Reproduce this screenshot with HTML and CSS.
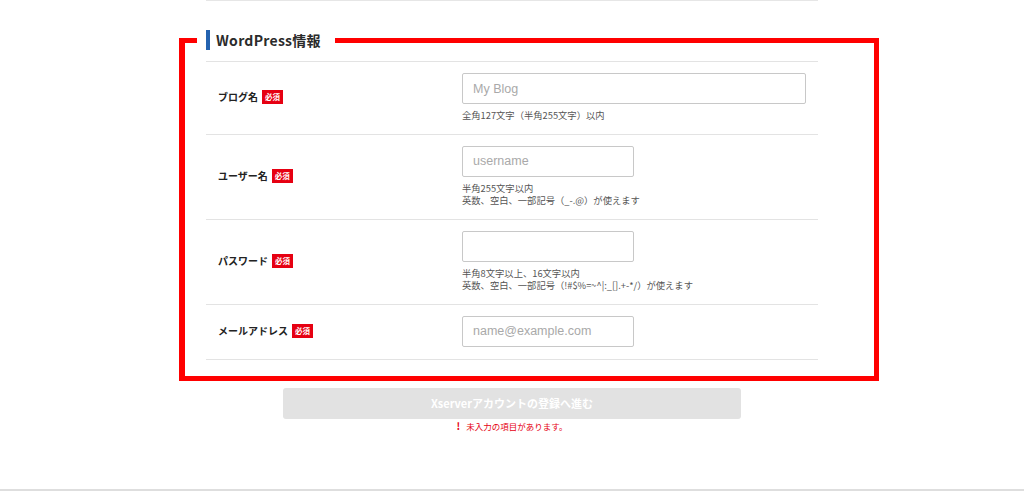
FILE: index.html
```html
<!DOCTYPE html>
<html lang="ja">
<head>
    <meta charset="UTF-8">
    <meta name="viewport" content="width=device-width, initial-scale=1.0">
    <title>WordPress情報</title>
    <link rel="stylesheet" href="styles.css">
</head>
<body>
    <div class="container">
        <section class="wp-section">
            <h2 class="section-title">WordPress情報</h2>
            <div class="highlight-frame"></div>

            <div class="field-list">
                <div class="field">
                    <div class="field-label">ブログ名<span class="required">必須</span></div>
                    <div class="field-body">
                        <input class="text-input wide" type="text" placeholder="My Blog">
                        <p class="hint">全角127文字（半角255文字）以内</p>
                    </div>
                </div>
                <div class="field">
                    <div class="field-label">ユーザー名<span class="required">必須</span></div>
                    <div class="field-body">
                        <input class="text-input" type="text" placeholder="username">
                        <p class="hint">半角255文字以内<br>英数、空白、一部記号（_-.@）が使えます</p>
                    </div>
                </div>
                <div class="field">
                    <div class="field-label">パスワード<span class="required">必須</span></div>
                    <div class="field-body">
                        <input class="text-input" type="password">
                        <p class="hint">半角8文字以上、16文字以内<br>英数、空白、一部記号（!#$%=~^|:_[].+-*/）が使えます</p>
                    </div>
                </div>
                <div class="field">
                    <div class="field-label">メールアドレス<span class="required">必須</span></div>
                    <div class="field-body">
                        <input class="text-input" type="email" placeholder="name@example.com">
                    </div>
                </div>
            </div>
        </section>

        <div class="actions">
            <button class="submit-btn" type="button" disabled>Xserverアカウントの登録へ進む</button>
            <p class="error-msg"><span class="error-icon">!</span>未入力の項目があります。</p>
        </div>
    </div>

    <footer class="page-footer"></footer>
</body>
</html>
```

FILE: styles.css
```css
* {
    margin: 0;
    padding: 0;
    box-sizing: border-box;
}

body {
    font-family: "Noto Sans CJK JP", "Noto Sans", sans-serif;
    color: #333;
    background: #fff;
    min-height: 491px;
    overflow: hidden;
}

.container {
    width: 612px;
    margin: 0 auto;
}

.wp-section {
    position: relative;
    border-top: 1px solid #e6e6e6;
    padding-top: 29px;
}

.section-title {
    position: relative;
    z-index: 1;
    display: flex;
    align-items: center;
    width: fit-content;
    height: 20px;
    margin: 0 0 11px -9px;
    padding: 0 14px 0 9px;
    background: #fff;
    font-size: 14px;
    font-weight: 700;
    line-height: 20px;
    letter-spacing: 0.02em;
    color: #2b2b2b;
}

.section-title::before {
    content: '';
    display: block;
    width: 4px;
    height: 20px;
    margin-right: 6px;
    background: #2463b0;
}

/* red annotation box drawn over the section */
.highlight-frame {
    position: absolute;
    top: 37px;
    left: -27px;
    width: 700px;
    height: 343px;
    border: 5px solid #ff0000;
    border-left-width: 6px;
    pointer-events: none;
}

.field-list {
    border-top: 1px solid #e3e3e3;
}

.field {
    display: grid;
    grid-template-columns: 256px 1fr;
    align-items: center;
    padding: 11px 0 12px;
    border-bottom: 1px solid #e3e3e3;
}

.field-label {
    display: flex;
    align-items: center;
    padding-left: 12px;
    font-size: 10px;
    font-weight: 700;
    color: #222;
    line-height: 14px;
}

.required {
    display: inline-block;
    margin-left: 4px;
    padding: 0 3px;
    height: 14px;
    background: #e60012;
    color: #fff;
    font-size: 7.5px;
    font-weight: 700;
    line-height: 14px;
}

.text-input {
    display: block;
    width: 172px;
    height: 31px;
    padding: 0 10px;
    border: 1px solid #c8c8c8;
    border-radius: 2px;
    font-family: "Liberation Sans", Arial, sans-serif;
    font-size: 12.5px;
    color: #333;
    background: #fff;
    outline: none;
}

.text-input.wide {
    width: 344px;
}

.text-input::placeholder {
    color: #a9a9a9;
}

.hint {
    margin-top: 5px;
    font-size: 9.3px;
    line-height: 12.5px;
    color: #555;
}

.actions {
    display: flex;
    flex-direction: column;
    align-items: center;
    margin-top: 28px;
}

.submit-btn {
    width: 458px;
    height: 31px;
    border: none;
    border-radius: 3px;
    background: #e2e2e2;
    color: #fff;
    font-family: "Noto Sans CJK JP", sans-serif;
    font-size: 11px;
    font-weight: 700;
}

.error-msg {
    display: flex;
    align-items: center;
    margin-top: 1px;
    font-size: 8.5px;
    line-height: 12px;
    color: #e60012;
}

.error-icon {
    margin-right: 6px;
    font-size: 10px;
    font-weight: 700;
}

.page-footer {
    margin-top: 57px;
    border-top: 2px solid #dedede;
    height: 10px;
}
```
